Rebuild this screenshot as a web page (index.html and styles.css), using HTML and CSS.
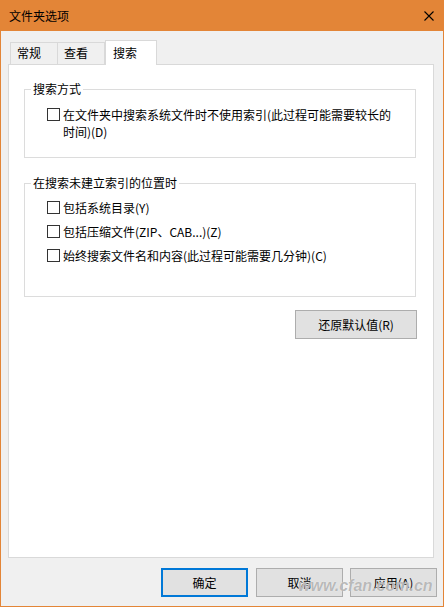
FILE: index.html
```html
<!DOCTYPE html>
<html>
<head>
    <title>文件夹选项</title>
    <link rel="stylesheet" href="styles.css">
</head>
<body>
    <div class="window">
        <div class="titlebar">
            <span class="title">文件夹选项</span>
            <svg class="close" width="10" height="10" viewBox="0 0 10 10">
                <path d="M0.5 0.5 L9.5 9.5 M9.5 0.5 L0.5 9.5" stroke="#000" stroke-width="1.1" fill="none"/>
            </svg>
        </div>
        <div class="content">
            <div class="tabs">
                <div class="tab tab-general">常规</div>
                <div class="tab tab-view">查看</div>
                <div class="tab tab-search active">搜索</div>
            </div>
            <div class="panel">
                <fieldset class="group group-how">
                    <legend>搜索方式</legend>
                    <div class="option">
                        <span class="box"></span>
                        <span class="label">在文件夹中搜索系统文件时不使用索引(此过程可能需要较长的<br>时间)(D)</span>
                    </div>
                </fieldset>

                <fieldset class="group group-where">
                    <legend>在搜索未建立索引的位置时</legend>
                    <div class="option">
                        <span class="box"></span>
                        <span class="label">包括系统目录(Y)</span>
                    </div>
                    <div class="option">
                        <span class="box"></span>
                        <span class="label">包括压缩文件(ZIP、CAB...)(Z)</span>
                    </div>
                    <div class="option">
                        <span class="box"></span>
                        <span class="label">始终搜索文件名和内容(此过程可能需要几分钟)(C)</span>
                    </div>
                </fieldset>

                <div class="restore-row">
                    <button class="btn btn-restore">还原默认值(R)</button>
                </div>
            </div>
            <div class="footer">
                <button class="btn btn-default">确定</button>
                <button class="btn">取消</button>
                <button class="btn">应用(A)</button>
            </div>
        </div>
        <span class="watermark">www.cfan.com.cn</span>
    </div>
</body>
</html>
```

FILE: styles.css
```css
body {
    margin: 0;
    font-family: "Noto Sans CJK SC", "Liberation Sans", sans-serif;
    font-size: 12px;
    color: #000000;
}

.window {
    position: relative;
    width: 444px;
    height: 607px;
    box-sizing: border-box;
    padding: 0 1px 1px 1px;
    background-color: #e38537;
    display: flex;
    flex-direction: column;
}

.titlebar {
    height: 31px;
    display: flex;
    align-items: center;
    justify-content: space-between;
    padding-left: 8px;
    flex-shrink: 0;
}

.title {
    font-size: 12px;
    line-height: 16px;
}

.close {
    margin-right: 9px;
    display: block;
}

.content {
    flex: 1;
    background-color: #f0f0f0;
    padding: 9px 6px 9px 7px;
    display: flex;
    flex-direction: column;
}

.tabs {
    display: flex;
    align-items: flex-end;
    height: 24px;
    margin-left: 2px;
}

.tab {
    box-sizing: border-box;
    height: 22px;
    line-height: 20px;
    padding-left: 6px;
    border: 1px solid #d9d9d9;
    border-bottom: none;
    background-color: #f0f0f0;
}

.tab-general {
    width: 48px;
}

.tab-view {
    width: 47px;
    border-left: none;
}

.tab.active {
    position: relative;
    z-index: 1;
    width: 52px;
    height: 25px;
    margin-bottom: -1px;
    padding-left: 7px;
    line-height: 24px;
    background-color: #ffffff;
    border-left: 1px solid #d9d9d9;
}

.panel {
    box-sizing: border-box;
    width: 426px;
    height: 494px;
    border: 1px solid #d9d9d9;
    background-color: #ffffff;
    padding: 16px 17px 0 15px;
}

.group {
    margin: 0;
    padding: 0 6px;
    border: 1px solid #dcdcdc;
    min-width: 0;
}

.group legend {
    padding: 0 2px;
    line-height: 16px;
}

.group-how {
    padding-top: 9px;
    padding-bottom: 17px;
}

.group-where {
    margin-top: 17px;
    padding-top: 8px;
    padding-bottom: 32px;
}

.option {
    display: flex;
    align-items: flex-start;
    padding-left: 16px;
    line-height: 17px;
}

.option + .option {
    margin-top: 7px;
}

.box {
    flex-shrink: 0;
    width: 13px;
    height: 13px;
    box-sizing: border-box;
    border: 1px solid #333333;
    background-color: #ffffff;
    margin-top: 2px;
    margin-right: 3px;
}

.restore-row {
    display: flex;
    justify-content: flex-end;
    margin-top: 13px;
    margin-right: -1px;
}

.btn {
    box-sizing: border-box;
    height: 29px;
    width: 87px;
    font-family: "Noto Sans CJK SC", "Liberation Sans", sans-serif;
    font-size: 12px;
    color: #000000;
    background-color: #e1e1e1;
    border: 1px solid #adadad;
    padding: 0;
}

.btn-restore {
    width: 122px;
}

.btn-default {
    border: 2px solid #0078d7;
}

.footer {
    display: flex;
    justify-content: flex-end;
    gap: 8px;
    margin-top: 10px;
    padding-right: 0;
}

.footer .btn:last-child {
    margin-left: -1px;
}

.watermark {
    position: absolute;
    left: 298px;
    top: 577px;
    font-family: "Liberation Sans", sans-serif;
    font-size: 16px;
    font-weight: bold;
    font-style: italic;
    color: rgba(140, 140, 140, 0.6);
    text-shadow: 0 0 1px #ffffff;
    pointer-events: none;
}
```
